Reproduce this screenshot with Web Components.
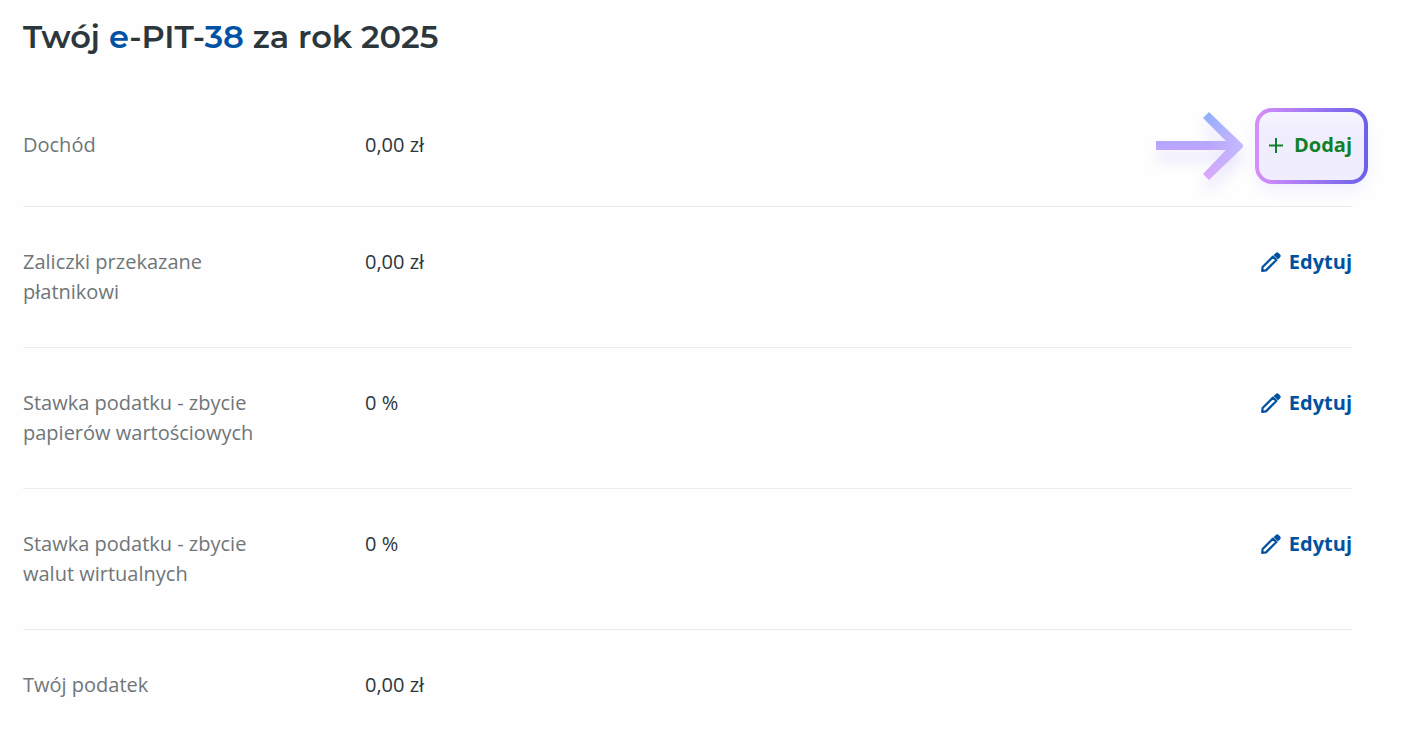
<!DOCTYPE html>
<html lang="pl">
<head>
<meta charset="UTF-8">
<meta name="viewport" content="width=device-width, initial-scale=1">
<title>Twój e-PIT-38</title>
<style>
  body {
    margin: 0;
    background: #fefefe;
    color: #2c373d;
    font-family: "Open Sans", "Noto Sans", sans-serif;
    font-size: 20px;
    line-height: 30px;
  }
</style>
</head>
<body>
<tax-summary>
  <span slot="title">Twój <b>e</b>-PIT-<b>38</b> za rok 2025</span>
  <tax-row label="Dochód" value="0,00 zł">
    <action-callout><action-button icon="add">Dodaj</action-button></action-callout>
  </tax-row>
  <tax-row label="Zaliczki przekazane płatnikowi" value="0,00 zł">
    <action-button icon="edit">Edytuj</action-button>
  </tax-row>
  <tax-row label="Stawka podatku - zbycie papierów wartościowych" value="0 %">
    <action-button icon="edit">Edytuj</action-button>
  </tax-row>
  <tax-row label="Stawka podatku - zbycie walut wirtualnych" value="0 %">
    <action-button icon="edit">Edytuj</action-button>
  </tax-row>
  <tax-row label="Twój podatek" value="0,00 zł"></tax-row>
</tax-summary>

<script>
class TaxSummary extends HTMLElement {
  connectedCallback() {
    this.attachShadow({ mode: 'open' });
    this.shadowRoot.innerHTML = `
      <style>
        :host {
          display: block;
          padding: 17px 63px 0 23px;
        }
        h1 {
          margin: 0 0 33px;
          font-family: Montserrat, Inter, sans-serif;
          font-size: 32px;
          line-height: 40px;
          font-weight: 600;
        }
        ::slotted([slot="title"]) {
          --accent: #0052a5;
        }
      </style>
      <h1><slot name="title"></slot></h1>
      <section><slot></slot></section>
    `;
    this.querySelectorAll('[slot="title"] b').forEach((b) => {
      b.style.color = 'var(--accent)';
      b.style.fontWeight = 'inherit';
    });
  }
}
customElements.define('tax-summary', TaxSummary);

class TaxRow extends HTMLElement {
  connectedCallback() {
    this.attachShadow({ mode: 'open' });
    this.shadowRoot.innerHTML = `
      <style>
        :host {
          display: block;
          border-bottom: 1px solid #ebebed;
        }
        :host(:last-of-type) {
          border-bottom: 0;
        }
        .row {
          display: grid;
          grid-template-columns: 242px 1fr auto;
          column-gap: 100px;
          align-items: start;
          min-height: 36px;
          padding: 40px 0;
        }
        :host(:last-of-type) .row {
          padding-bottom: 0;
        }
        .label {
          color: #6f7678;
        }
      </style>
      <div class="row">
        <span class="label">${this.getAttribute('label')}</span>
        <span class="value">${this.getAttribute('value')}</span>
        <slot></slot>
      </div>
    `;
  }
}
customElements.define('tax-row', TaxRow);

const ICONS = {
  add: '<svg viewBox="0 0 20 20"><path d="M10 3v15M3 10.500h14" fill="none" stroke="currentColor" stroke-width="2"/></svg>',
  edit: '<svg viewBox="0 0 20 20"><path d="M1.200 18.800 1.600 15 12 4.600 15.400 8 5 18.400Z" fill="none" stroke="currentColor" stroke-width="2.200" stroke-linejoin="round"/><path fill="currentColor" d="M12.600 3 14.800 .9Q16.200 -.4 17.600 .9L19.100 2.400Q20.400 3.800 19.100 5.200L17 7.400Z"/></svg>'
};

class ActionButton extends HTMLElement {
  connectedCallback() {
    const icon = this.getAttribute('icon');
    this.attachShadow({ mode: 'open' });
    this.shadowRoot.innerHTML = `
      <style>
        :host {
          display: block;
          color: #0052a0;
        }
        :host([icon="add"]) {
          color: #10802a;
        }
        button {
          display: flex;
          align-items: center;
          gap: 8px;
          padding: 0;
          border: 0;
          background: none;
          color: inherit;
          font: inherit;
          font-weight: 700;
          cursor: pointer;
        }
        svg {
          display: block;
          width: 20px;
          height: 20px;
        }
      </style>
      <button type="button">${ICONS[icon]}<span><slot></slot></span></button>
    `;
  }
}
customElements.define('action-button', ActionButton);

// Gradient ring with an arrow, drawn around the slotted button
class ActionCallout extends HTMLElement {
  connectedCallback() {
    this.attachShadow({ mode: 'open' });
    this.shadowRoot.innerHTML = `
      <style>
        :host {
          display: block;
          position: relative;
          isolation: isolate;
        }
        .ring {
          position: absolute;
          z-index: -1;
          inset: -22px -16px -24px -11px;
          border: 4px solid transparent;
          border-radius: 17px;
          background:
            linear-gradient(#f7f5fe, #f0edfd 30%, #f0edfd) padding-box,
            linear-gradient(90deg, #d68ffa, #6a61e9) border-box;
          box-shadow: 0 8px 14px rgba(120, 100, 240, 0.08);
        }
        .arrow {
          position: absolute;
          z-index: -1;
          top: -30px;
          right: calc(100% + 11px);
          width: 112px;
          height: 100px;
          overflow: visible;
          filter: drop-shadow(0 11px 7px rgba(120, 100, 240, 0.16));
        }
      </style>
      <div class="ring"></div>
      <svg class="arrow" viewBox="0 0 112 100" aria-hidden="true">
        <defs>
          <linearGradient id="head" x1="0" y1="12" x2="0" y2="80" gradientUnits="userSpaceOnUse">
            <stop offset="0" stop-color="#8fb2fd"/>
            <stop offset="0.5" stop-color="#b9a5fd"/>
            <stop offset="1" stop-color="#dda9fc"/>
          </linearGradient>
          <linearGradient id="tip" x1="66" y1="0" x2="100" y2="0" gradientUnits="userSpaceOnUse">
            <stop offset="0" stop-color="#c8bfff" stop-opacity="0"/>
            <stop offset="1" stop-color="#c8bfff" stop-opacity="0.8"/>
          </linearGradient>
        </defs>
        <path fill="url(#head)" d="M13 41H83L60 18 66 12 99 44Q101 46 99 48L66 80 60 74 83 50H13Z"/>
        <path fill="url(#tip)" d="M13 41H83L60 18 66 12 99 44Q101 46 99 48L66 80 60 74 83 50H13Z"/>
      </svg>
      <slot></slot>
    `;
  }
}
customElements.define('action-callout', ActionCallout);
</script>
</body>
</html>
